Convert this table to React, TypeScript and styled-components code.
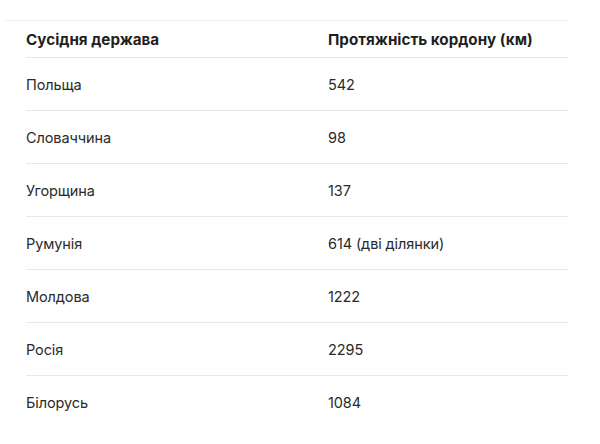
import React from 'react'
import styled, { createGlobalStyle } from 'styled-components'

const GlobalStyle = createGlobalStyle`
   html, body {
      margin: 0;
      padding: 0;
      background: #ffffff;
   }
   body {
      font-family: Inter, Roboto, 'Noto Sans', Arial, sans-serif;
      color: #1f1f1f;
   }
`

const Wrapper = styled.div`
   margin: 20px 32px 0 5px;
   border-top: 1px solid #ececef;
   padding-left: 21px;
`

const Table = styled.table`
   width: 100%;
   border-collapse: collapse;
   font-size: 14.5px;
   letter-spacing: -0.1px;
`

const HeadCell = styled.th`
   text-align: left;
   font-size: 15.2px;
   font-weight: 700;
   letter-spacing: 0;
   height: 36px;
   padding: 0;
   border-bottom: 1.5px solid #e8e8ec;
   color: #1f1f1f;
`

const Row = styled.tr<{ $last?: boolean }>`
   height: 53px;
   border-bottom: ${p => (p.$last ? 'none' : '1.5px solid #e8e8ec')};
`

const Cell = styled.td<{ $first?: boolean }>`
   padding: 0;
   width: ${p => (p.$first ? '302px' : 'auto')};
   color: #2a2a2a;
`

const borders = [
   ['Польща', '542'],
   ['Словаччина', '98'],
   ['Угорщина', '137'],
   ['Румунія', '614 (дві ділянки)'],
   ['Молдова', '1222'],
   ['Росія', '2295'],
   ['Білорусь', '1084'],
]

export default function App() {
   return (
      <>
         <GlobalStyle />
         <Wrapper>
            <Table>
               <thead>
                  <tr>
                     <HeadCell>Сусідня держава</HeadCell>
                     <HeadCell>Протяжність кордону (км)</HeadCell>
                  </tr>
               </thead>
               <tbody>
                  {borders.map(([country, length], index) => (
                     <Row key={country} $last={index === borders.length - 1}>
                        <Cell $first>{country}</Cell>
                        <Cell>{length}</Cell>
                     </Row>
                  ))}
               </tbody>
            </Table>
         </Wrapper>
      </>
   )
}
